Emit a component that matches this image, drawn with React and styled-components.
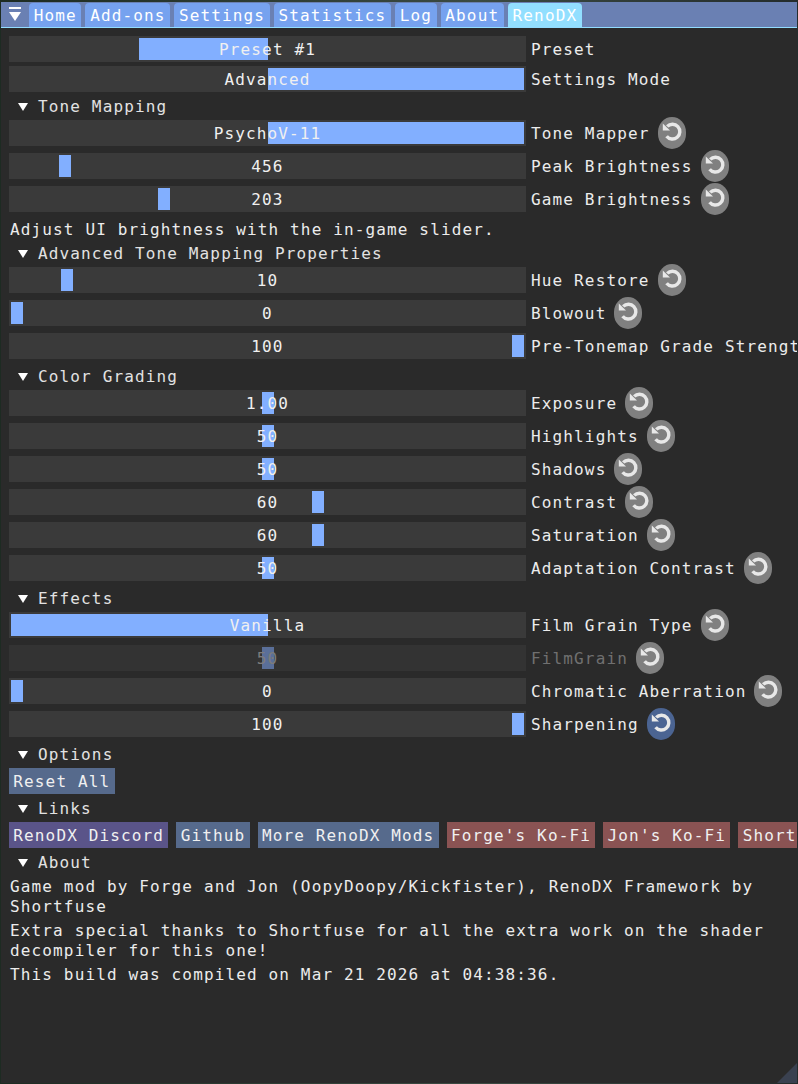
import React from "react";
import styled, { createGlobalStyle } from "styled-components";

const GlobalStyle = createGlobalStyle`
  html, body {
    margin: 0;
    padding: 0;
    background: #1d2b22;
  }
  * {
    box-sizing: border-box;
  }
`;

const Page = styled.div`
  width: 798px;
  height: 1084px;
  padding: 2px 1px 1px 1px;
  overflow: hidden;
  background: linear-gradient(90deg, #1d2b22, #3b4a42 60%, #242c2c);
`;

const Window = styled.div`
  position: relative;
  height: 100%;
  overflow: hidden;
  background: #2a2a2a;
  color: #ececec;
  font-family: "DejaVu Sans Mono", "Liberation Mono", monospace;
  font-size: 16px;
  letter-spacing: 1.14px;
`;

const TabBar = styled.div`
  display: flex;
  align-items: flex-end;
  gap: 4px;
  height: 26px;
  padding-left: 8px;
  background: #6a80b3;
  border-bottom: 1px solid #92dcff;
`;

const Collapse = styled.svg`
  width: 12px;
  height: 15px;
  margin-right: 4px;
  align-self: center;
  fill: #ffffff;
`;

const Tab = styled.div`
  height: 24px;
  padding: 0 4.7px;
  line-height: 25px;
  white-space: nowrap;
  border-radius: 4px 4px 0 0;
  color: #ffffff;
  background: ${(p) => (p.$active ? "#92dfff" : "#76a2ef")};
`;

const Panel = styled.div`
  display: flex;
  flex-direction: column;
  padding: 8px 0 0 8px;
`;

const PlainRow = styled.div`
  display: flex;
  align-items: center;
  height: 26px;
  margin-bottom: 4px;
  white-space: nowrap;
`;

const ResetRow = styled.div`
  display: flex;
  align-items: center;
  height: 32px;
  margin-bottom: 1px;
  white-space: nowrap;
`;

const Frame = styled.div`
  position: relative;
  flex: 0 0 517px;
  height: 26px;
  line-height: 27px;
  text-align: center;
  background: ${(p) => (p.$disabled ? "#333333" : "#3a3a3a")};
  color: ${(p) => (p.$disabled ? "#7c7c7c" : "#f0f0f0")};
`;

const Grab = styled.div`
  position: absolute;
  top: 2px;
  bottom: 2px;
  background: ${(p) => (p.$disabled ? "#5a6f99" : "#82afff")};
`;

const Value = styled.span`
  position: relative;
`;

const Label = styled.span`
  margin-left: 5px;
  line-height: 27px;
  color: ${(p) => (p.$disabled ? "#707070" : "#ececec")};
`;

const ResetButton = styled.div`
  display: flex;
  flex: 0 0 28px;
  height: 32px;
  margin-left: 8px;
  border-radius: 14px / 15px;
  background: ${(p) => (p.$changed ? "#4b6492" : "#808080")};
`;

const ResetIcon = styled.svg`
  width: 28px;
  height: 32px;
`;

const Header = styled.div`
  display: flex;
  align-items: center;
  height: 20px;
  padding: 1px 0 0 9px;
  line-height: 22px;
  margin-top: ${(p) => (p.$first ? "0" : "3px")};
  margin-bottom: ${(p) => (p.$tight ? "1px" : "4px")};
  color: #e2e2e2;
  white-space: nowrap;
`;

const Arrow = styled.span`
  width: 0;
  height: 0;
  margin-right: 10px;
  border-left: 5px solid transparent;
  border-right: 5px solid transparent;
  border-top: 8px solid #ffffff;
`;

const Note = styled.div`
  height: 20px;
  padding-left: 1px;
  line-height: 22px;
  margin: 3px 0 4px;
  white-space: nowrap;
`;

const ButtonRow = styled.div`
  display: flex;
  gap: 8px;
  margin-bottom: 4px;
`;

const Button = styled.div`
  flex: 0 0 auto;
  height: 26px;
  padding: 0 4.3px;
  line-height: 27px;
  white-space: nowrap;
  color: #f0f0f0;
  background: ${(p) => p.$color || "#566a8c"};
`;

const Paragraph = styled.p`
  width: 786px;
  margin: 0 0 3px;
  padding: 1px 0 0 1px;
  line-height: 20px;
`;

const Grip = styled.div`
  position: absolute;
  right: 0;
  bottom: 0;
  width: 20px;
  height: 20px;
  background: #3a4150;
  clip-path: polygon(100% 0, 100% 100%, 0 100%);
`;

const INNER = 513;

// width and position of the grab, the same way the slider widget works them out
function grabStyle({ pos = 0, options }) {
  const width = options ? INNER / options : 12;
  return { left: 2 + pos * (INNER - width), width };
}

const Reset = ({ changed }) => (
  <ResetButton $changed={changed}>
    <ResetIcon viewBox="0 0 28 32">
      <path
        d="M9.2 9.4A7.4 7.4 0 1 1 8.6 19.2"
        fill="none"
        stroke="#e8e8e8"
        strokeWidth="3.4"
      />
      <polygon points="4.8,6.4 4.8,13.6 12,13.6" fill="#e8e8e8" />
    </ResetIcon>
  </ResetButton>
);

const Control = ({ value, label, reset, changed, disabled, ...grab }) => {
  const Row = reset ? ResetRow : PlainRow;
  return (
    <Row>
      <Frame $disabled={disabled}>
        <Grab $disabled={disabled} style={grabStyle(grab)} />
        <Value>{value}</Value>
      </Frame>
      <Label $disabled={disabled}>{label}</Label>
      {reset && <Reset changed={changed} />}
    </Row>
  );
};

const Section = ({ title, tight, first }) => (
  <Header $tight={tight} $first={first}>
    <Arrow />
    {title}
  </Header>
);

const tabs = ["Home", "Add-ons", "Settings", "Statistics", "Log", "About"];

const links = [
  { text: "RenoDX Discord", color: "#5a5489" },
  { text: "Github" },
  { text: "More RenoDX Mods" },
  { text: "Forge's Ko-Fi", color: "#8a5353" },
  { text: "Jon's Ko-Fi", color: "#8a5353" },
  { text: "Shortfuse's Ko-Fi", color: "#8a5353" },
];

const toneMapping = [
  { value: "PsychoV-11", label: "Tone Mapper", pos: 1, options: 2 },
  { value: "456", label: "Peak Brightness", pos: 0.096 },
  { value: "203", label: "Game Brightness", pos: 0.293 },
];

const advanced = [
  { value: "10", label: "Hue Restore", pos: 0.1 },
  { value: "0", label: "Blowout", pos: 0 },
];

const grading = [
  { value: "1.00", label: "Exposure", pos: 0.5 },
  { value: "50", label: "Highlights", pos: 0.5 },
  { value: "50", label: "Shadows", pos: 0.5 },
  { value: "60", label: "Contrast", pos: 0.6 },
  { value: "60", label: "Saturation", pos: 0.6 },
  { value: "50", label: "Adaptation Contrast", pos: 0.5 },
];

const effects = [
  { value: "Vanilla", label: "Film Grain Type", pos: 0, options: 2 },
  { value: "50", label: "FilmGrain", pos: 0.5, disabled: true },
  { value: "0", label: "Chromatic Aberration", pos: 0 },
  { value: "100", label: "Sharpening", pos: 1, changed: true },
];

const App = () => {
  const renderRows = (rows) =>
    rows.map((row) => <Control key={row.label} reset {...row} />);

  return (
    <Page>
      <GlobalStyle />
      <Window>
        <TabBar>
          <Collapse viewBox="0 0 12 15">
            <rect x="0" y="0" width="12" height="2" />
            <polygon points="0,5 12,5 6,14" />
          </Collapse>
          {tabs.map((tab) => (
            <Tab key={tab}>{tab}</Tab>
          ))}
          <Tab $active>RenoDX</Tab>
        </TabBar>
        <Panel>
          <Control value="Preset #1" label="Preset" pos={1 / 3} options={4} />
          <Control value="Advanced" label="Settings Mode" pos={1} options={2} />
          <Section title="Tone Mapping" tight first />
          {renderRows(toneMapping)}
          <Note>Adjust UI brightness with the in-game slider.</Note>
          <Section title="Advanced Tone Mapping Properties" tight first />
          {renderRows(advanced)}
          <ResetRow>
            <Frame>
              <Grab style={grabStyle({ pos: 1 })} />
              <Value>100</Value>
            </Frame>
            <Label>Pre-Tonemap Grade Strength</Label>
          </ResetRow>
          <Section title="Color Grading" tight />
          {renderRows(grading)}
          <Section title="Effects" tight />
          {renderRows(effects)}
          <Section title="Options" />
          <ButtonRow>
            <Button>Reset All</Button>
          </ButtonRow>
          <Section title="Links" first />
          <ButtonRow>
            {links.map((link) => (
              <Button key={link.text} $color={link.color}>
                {link.text}
              </Button>
            ))}
          </ButtonRow>
          <Section title="About" first />
          <Paragraph>
            Game mod by Forge and Jon (OopyDoopy/Kickfister), RenoDX Framework
            by Shortfuse
          </Paragraph>
          <Paragraph>
            Extra special thanks to Shortfuse for all the extra work on the
            shader decompiler for this one!
          </Paragraph>
          <Paragraph>This build was compiled on Mar 21 2026 at 04:38:36.</Paragraph>
        </Panel>
        <Grip />
      </Window>
    </Page>
  );
};

export default App;
